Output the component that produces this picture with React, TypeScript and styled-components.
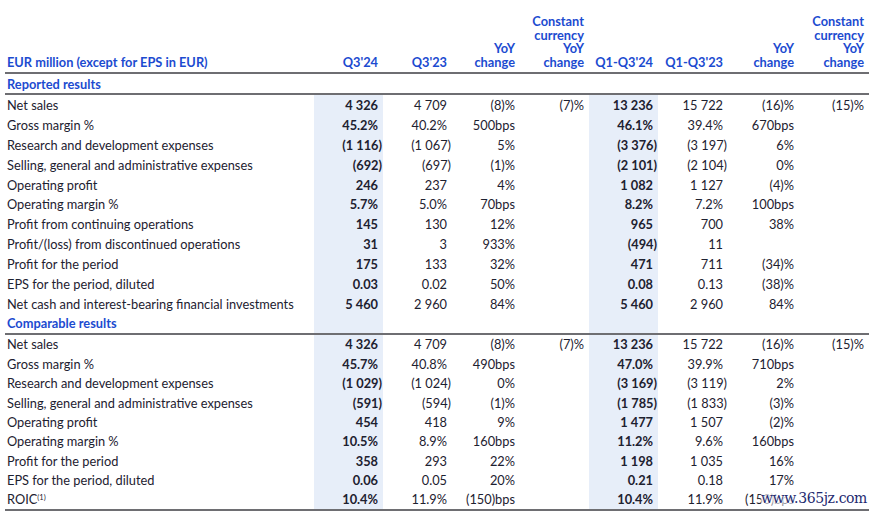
import React from "react";
import styled, { createGlobalStyle } from "styled-components";

const Global = createGlobalStyle`
  html, body { margin: 0; padding: 0; background: #ffffff; }
  body { font-family: "Lato", "Noto Sans", sans-serif; color: #1d2130; }
`;

const COLS = "309px 69px 69px 68px 69px 69px 70px 71px 70px";
const BLUE = "#1c4bd0";
const HL = "#e7eef9";
const FS = "12.8px";

const Page = styled.div`
  padding: 0 0 0 5px;
  width: 872px;
  position: relative;
`;

const Table = styled.div`
  width: 864px;
`;

const HeaderRow = styled.div`
  display: grid;
  grid-template-columns: ${COLS};
  height: 74px;
  align-items: end;
  border-bottom: 2px solid #6e6e72;
  box-sizing: border-box;
`;

const HeadCell = styled.div<{ $left?: boolean }>`
  font-size: ${FS};
  font-weight: 700;
  line-height: 13.4px;
  color: ${BLUE};
  text-align: ${(p) => (p.$left ? "left" : "right")};
  padding: 0 5px 3px ${(p) => (p.$left ? "2px" : "0")};
`;

const SectionRow = styled.div`
  display: grid;
  grid-template-columns: ${COLS};
  height: 21px;
  align-items: center;
  border-bottom: 2px solid #6e6e72;
  box-sizing: border-box;
`;

const SectionTitle = styled.div`
  font-size: ${FS};
  font-weight: 700;
  color: ${BLUE};
  padding-left: 2px;
`;

const SectionFill = styled.div<{ $hl?: boolean }>`
  align-self: stretch;
  background: ${(p) => (p.$hl ? HL : "transparent")};
`;

const Section = styled.div<{ $h: number }>`
  display: grid;
  grid-auto-rows: ${(p) => p.$h}px;
`;

const Row = styled.div`
  display: grid;
  grid-template-columns: ${COLS};
  align-items: stretch;
`;

const Label = styled.div`
  font-size: ${FS};
  padding-left: 2px;
  display: flex;
  align-items: center;
  white-space: nowrap;
`;

const Cell = styled.div<{ $bold?: boolean; $hl?: boolean; $hang?: boolean }>`
  font-size: ${FS};
  font-weight: ${(p) => (p.$bold ? 700 : 400)};
  background: ${(p) => (p.$hl ? HL : "transparent")};
  display: flex;
  align-items: center;
  justify-content: flex-end;
  padding-right: ${(p) => (p.$hang ? "1px" : "5px")};
  white-space: nowrap;
`;

const Sup = styled.sup`
  font-size: 7.5px;
  vertical-align: top;
  position: relative;
  top: -2px;
`;

const Bottom = styled.div`
  border-top: 2px solid #6e6e72;
`;

const Watermark = styled.div`
  position: absolute;
  left: 761px;
  top: 488px;
  font-family: "DejaVu Serif", serif;
  font-size: 14px;
  letter-spacing: -0.4px;
  color: #1e2a70;
  text-shadow: 0 0 2px #ffffff, 0 0 3px #ffffff, 0 0 4px #ffffff;
  background: rgba(255, 255, 255, 0.5);
  line-height: 20px;
`;

type RowData = [React.ReactNode, ...string[]];

const reported: RowData[] = [
  ["Net sales", "4 326", "4 709", "(8)%", "(7)%", "13 236", "15 722", "(16)%", "(15)%"],
  ["Gross margin %", "45.2%", "40.2%", "500bps", "", "46.1%", "39.4%", "670bps", ""],
  ["Research and development expenses", "(1 116)", "(1 067)", "5%", "", "(3 376)", "(3 197)", "6%", ""],
  ["Selling, general and administrative expenses", "(692)", "(697)", "(1)%", "", "(2 101)", "(2 104)", "0%", ""],
  ["Operating profit", "246", "237", "4%", "", "1 082", "1 127", "(4)%", ""],
  ["Operating margin %", "5.7%", "5.0%", "70bps", "", "8.2%", "7.2%", "100bps", ""],
  ["Profit from continuing operations", "145", "130", "12%", "", "965", "700", "38%", ""],
  ["Profit/(loss) from discontinued operations", "31", "3", "933%", "", "(494)", "11", "", ""],
  ["Profit for the period", "175", "133", "32%", "", "471", "711", "(34)%", ""],
  ["EPS for the period, diluted", "0.03", "0.02", "50%", "", "0.08", "0.13", "(38)%", ""],
  ["Net cash and interest-bearing financial investments", "5 460", "2 960", "84%", "", "5 460", "2 960", "84%", ""],
];

const comparable: RowData[] = [
  ["Net sales", "4 326", "4 709", "(8)%", "(7)%", "13 236", "15 722", "(16)%", "(15)%"],
  ["Gross margin %", "45.7%", "40.8%", "490bps", "", "47.0%", "39.9%", "710bps", ""],
  ["Research and development expenses", "(1 029)", "(1 024)", "0%", "", "(3 169)", "(3 119)", "2%", ""],
  ["Selling, general and administrative expenses", "(591)", "(594)", "(1)%", "", "(1 785)", "(1 833)", "(3)%", ""],
  ["Operating profit", "454", "418", "9%", "", "1 477", "1 507", "(2)%", ""],
  ["Operating margin %", "10.5%", "8.9%", "160bps", "", "11.2%", "9.6%", "160bps", ""],
  ["Profit for the period", "358", "293", "22%", "", "1 198", "1 035", "16%", ""],
  ["EPS for the period, diluted", "0.06", "0.05", "20%", "", "0.21", "0.18", "17%", ""],
  [
    <>
      ROIC<Sup>(1)</Sup>
    </>,
    "10.4%", "11.9%", "(150)bps", "", "10.4%", "11.9%", "(150)bps", "",
  ],
];

const headers: React.ReactNode[] = [
  "EUR million (except for EPS in EUR)",
  "Q3'24",
  "Q3'23",
  <>YoY<br />change</>,
  <>Constant<br />currency<br />YoY<br />change</>,
  "Q1-Q3'24",
  "Q1-Q3'23",
  <>YoY<br />change</>,
  <>Constant<br />currency<br />YoY<br />change</>,
];

const isKey = (i: number) => i === 0 || i === 4;

function DataRows({ rows }: { rows: RowData[] }) {
  return (
    <>
      {rows.map((r, ri) => (
        <Row key={ri}>
          <Label>{r[0]}</Label>
          {r.slice(1).map((v, ci) => (
            <Cell
              key={ci}
              $bold={isKey(ci)}
              $hl={isKey(ci)}
              $hang={typeof v === "string" && v.endsWith(")")}
            >
              {(v as string).replace(/ /g, "\u00a0")}
            </Cell>
          ))}
        </Row>
      ))}
    </>
  );
}

export default function App() {
  return (
    <Page>
      <Global />
      <Table>
        <HeaderRow>
          {headers.map((h, i) => (
            <HeadCell key={i} $left={i === 0}>
              {h}
            </HeadCell>
          ))}
        </HeaderRow>
        <SectionRow>
          <SectionTitle>Reported results</SectionTitle>
        </SectionRow>
        <Section $h={19.9}>
          <DataRows rows={reported} />
        </Section>
        <SectionRow>
          <SectionTitle>Comparable results</SectionTitle>
          <SectionFill $hl />
          <SectionFill />
          <SectionFill />
          <SectionFill />
          <SectionFill $hl />
        </SectionRow>
        <Section $h={19.35}>
          <DataRows rows={comparable} />
        </Section>
        <Bottom />
      </Table>
      <Watermark>www.365jz.com</Watermark>
    </Page>
  );
}
